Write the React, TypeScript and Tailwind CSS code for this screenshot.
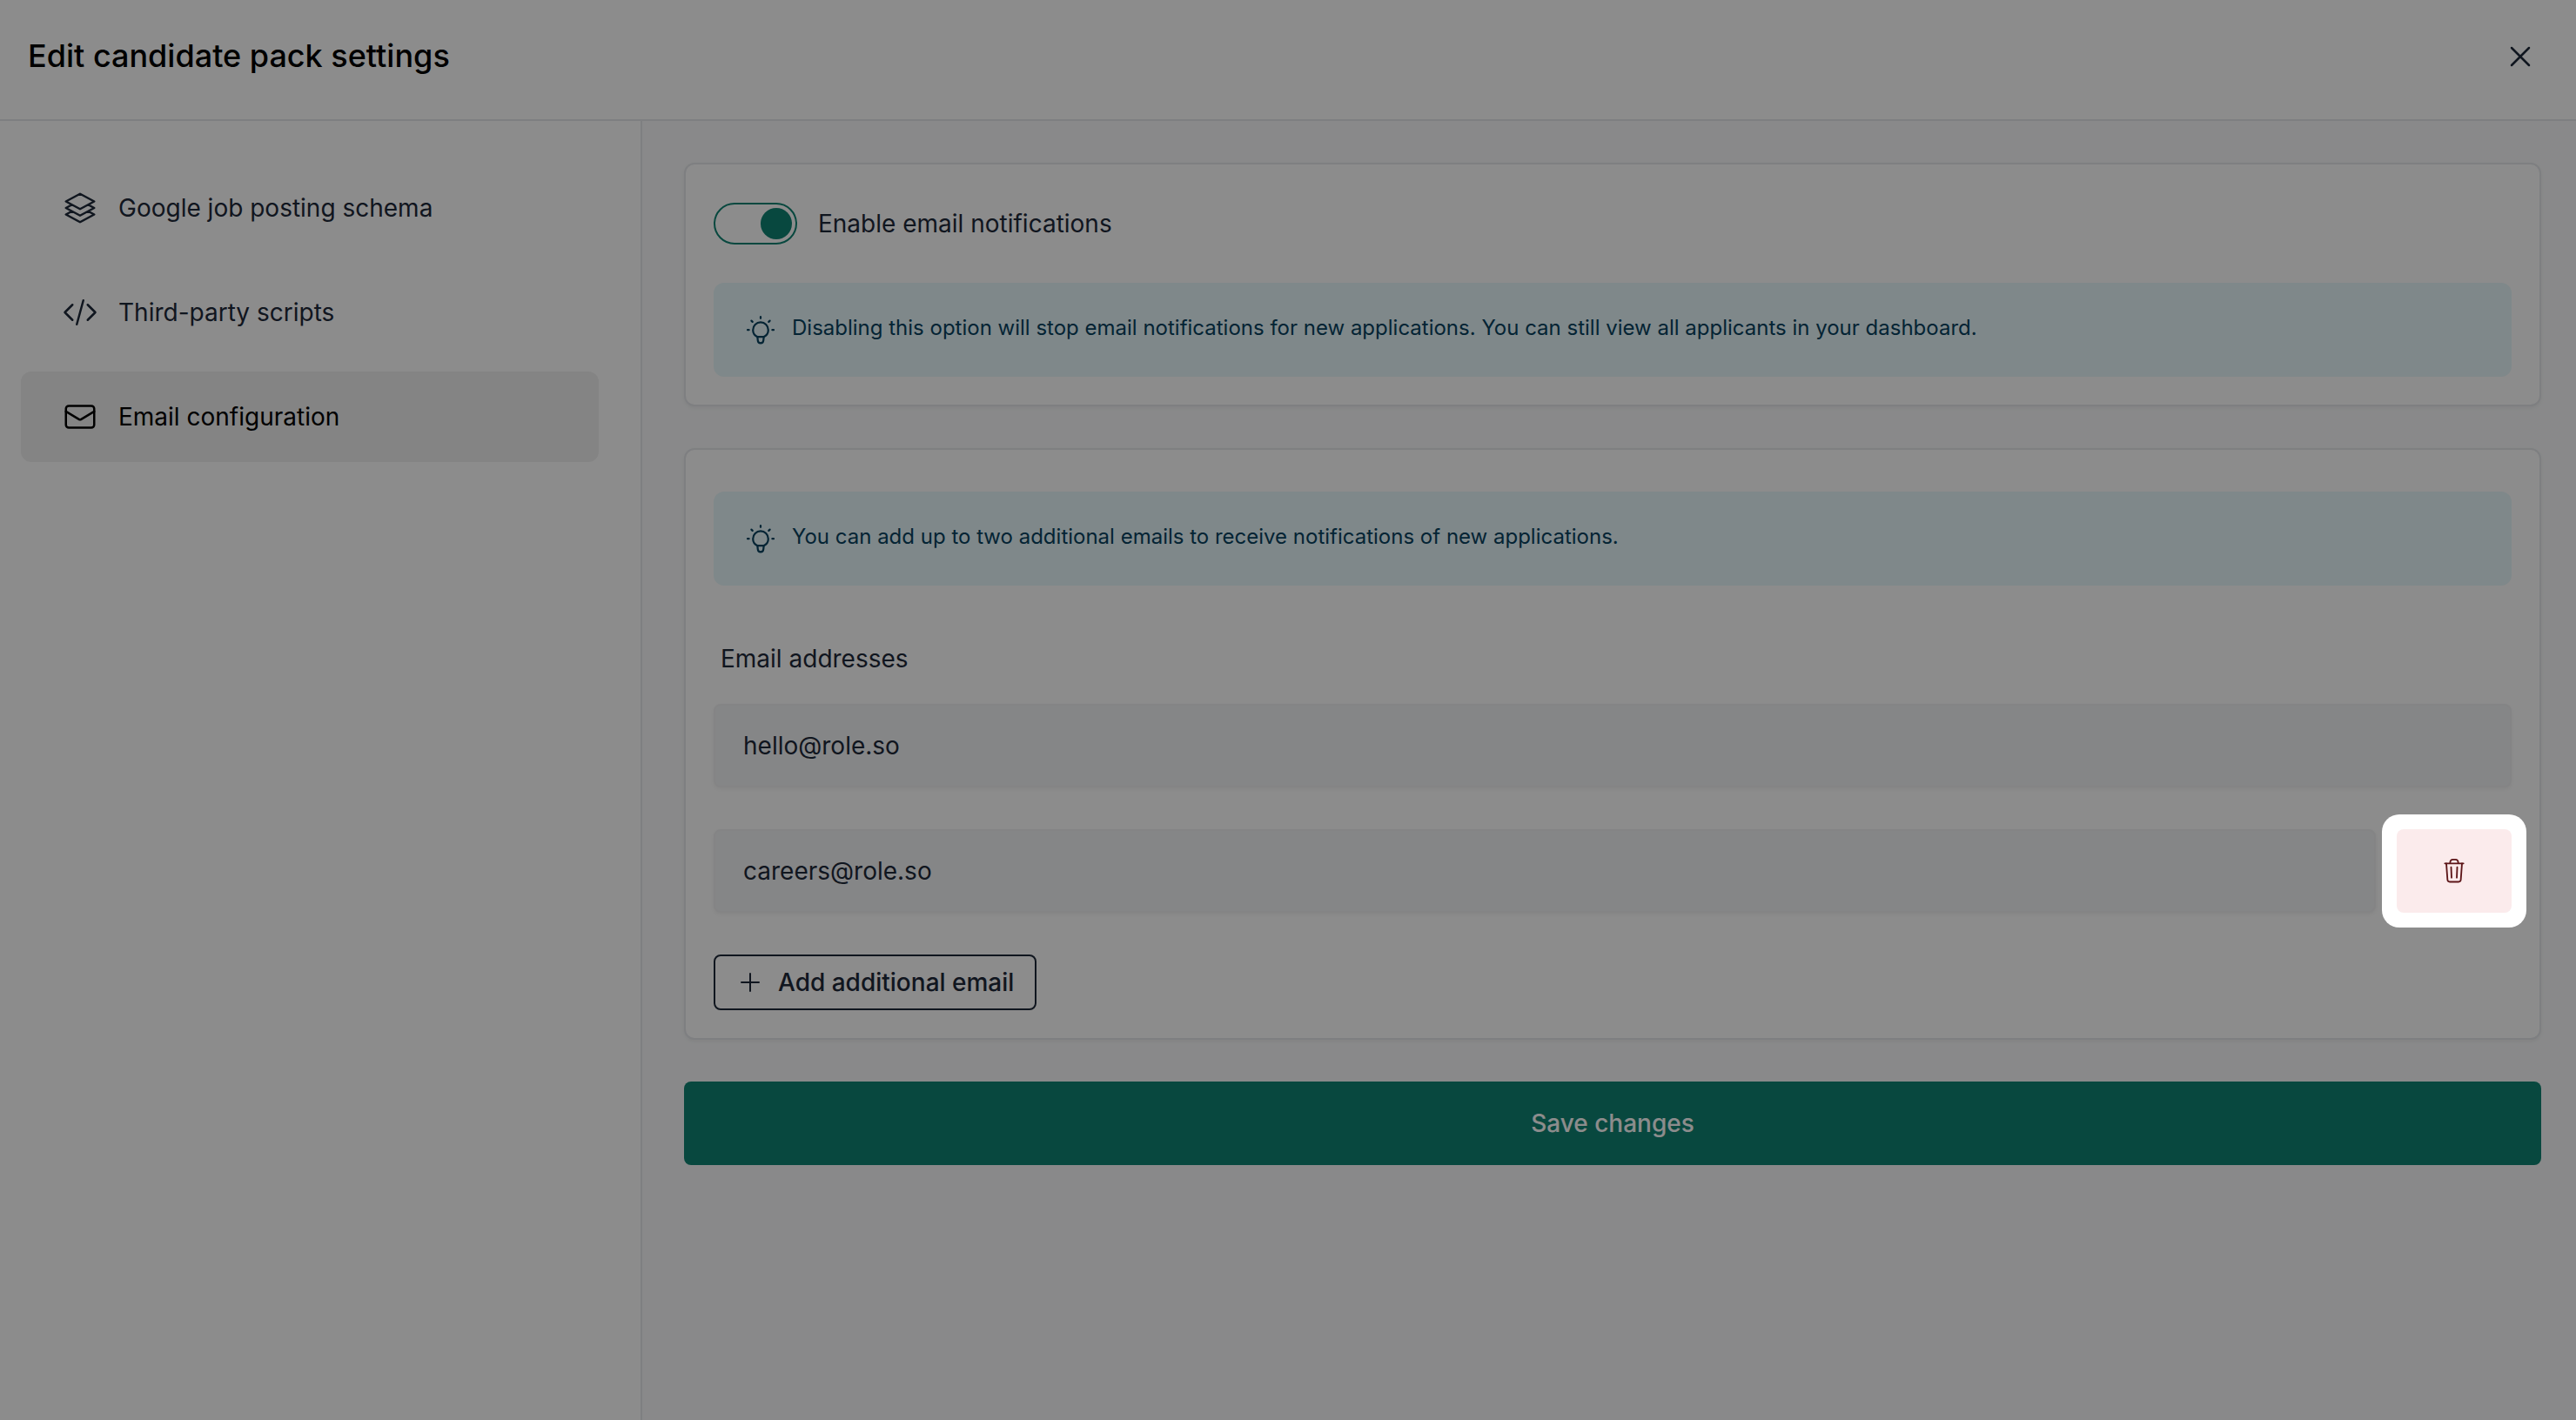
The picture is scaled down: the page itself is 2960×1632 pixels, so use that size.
import React, { useState } from 'react';

type IconProps = { className?: string };

function StrokeIcon({ className, children }: IconProps & { children: React.ReactNode }) {
  return (
    <svg
      viewBox="0 0 24 24"
      fill="none"
      stroke="currentColor"
      strokeWidth={1.5}
      strokeLinecap="round"
      strokeLinejoin="round"
      aria-hidden="true"
      className={className}
    >
      {children}
    </svg>
  );
}

const LayersIcon = ({ className }: IconProps) => (
  <StrokeIcon className={className}>
    <path d="M6.429 9.75 2.25 12l4.179 2.25m0-4.5 5.571 3 5.571-3m-11.142 0L2.25 7.5 12 2.25l9.75 5.25-4.179 2.25m0 0L21.75 12l-4.179 2.25m0 0 4.179 2.25L12 21.75 2.25 16.5l4.179-2.25m11.142 0-5.571 3-5.571-3" />
  </StrokeIcon>
);

const CodeIcon = ({ className }: IconProps) => (
  <StrokeIcon className={className}>
    <path d="M17.25 6.75 22.5 12l-5.25 5.25m-10.5 0L1.5 12l5.25-5.25m7.5-3-4.5 16.5" />
  </StrokeIcon>
);

const MailIcon = ({ className }: IconProps) => (
  <StrokeIcon className={className}>
    <rect x="2.25" y="4.5" width="19.5" height="15" rx="2" />
    <path d="M2.25 8.3 11.2 13.7Q12 14.2 12.8 13.7L21.75 8.3" />
  </StrokeIcon>
);

const CloseIcon = ({ className }: IconProps) => (
  <StrokeIcon className={className}>
    <path d="M6 18 18 6M6 6l12 12" />
  </StrokeIcon>
);

const PlusIcon = ({ className }: IconProps) => (
  <StrokeIcon className={className}>
    <path d="M12 4.5v15m7.5-7.5h-15" />
  </StrokeIcon>
);

const BulbIcon = ({ className }: IconProps) => (
  <svg
    viewBox="0 0 36 36"
    fill="none"
    stroke="currentColor"
    strokeWidth={2.2}
    strokeLinecap="round"
    strokeLinejoin="round"
    aria-hidden="true"
    className={className}
  >
    <path d="M14.7 26.2C11.5 24.9 9.2 21.8 9.2 18.2a8.8 8.8 0 0 1 17.6 0c0 3.6-2.3 6.7-5.5 8" />
    <path d="M14.3 26.2h7.4l-.5 4.200c-.2 2-1.500 3-3.200 3s-3-1-3.200-3l-.5-4.200Z" />
    <path d="M18 3v1.800M7.400 7.600l1.300 1.300M28.600 7.600l-1.300 1.300M3 18.200h1.600M31.400 18.200H33" />
  </svg>
);

const TrashIcon = ({ className }: IconProps) => (
  <svg
    viewBox="0 0 96 96"
    fill="none"
    stroke="currentColor"
    strokeWidth={5.5}
    strokeLinecap="round"
    strokeLinejoin="round"
    aria-hidden="true"
    className={className}
  >
    <path d="M16 22h64" />
    <path d="M34 21c0-8 4-12.500 10-12.500h8c6 0 10 4.500 10 12.500" />
    <path d="M21 22l4 56c.5 5 3 7.500 8 7.500h30c5 0 7.500-2.500 8-7.500l4-56" />
    <path d="M37.500 35l1.500 36M58.500 35l-1.500 36" />
  </svg>
);

const navItems = [
  { label: 'Google job posting schema', icon: LayersIcon },
  { label: 'Third-party scripts', icon: CodeIcon },
  { label: 'Email configuration', icon: MailIcon },
];

function Tip({ children }: { children: React.ReactNode }) {
  return (
    <div className="flex items-start gap-[18px] rounded-xl bg-[#e7f7fb] p-9 text-[#08425f]">
      <BulbIcon className="size-9 shrink-0" />
      <p className="text-2xl">{children}</p>
    </div>
  );
}

function Card({ children }: { children: React.ReactNode }) {
  return (
    <section className="rounded-xl border-2 border-gray-200 bg-white px-8 pb-8 shadow-[0_2px_4px_rgba(0,0,0,0.05)]">
      {children}
    </section>
  );
}

const inputClass =
  'h-24 w-full min-w-0 rounded-lg border-2 border-[#f0f1f3] bg-gray-100 px-8 shadow-[0_2px_4px_rgba(0,0,0,0.05)] outline-none';

export default function App() {
  const [enabled, setEnabled] = useState(true);
  const [active, setActive] = useState('Email configuration');
  const [emails, setEmails] = useState(['hello@role.so', 'careers@role.so']);

  const updateEmail = (index: number, value: string) =>
    setEmails(emails.map((email, i) => (i === index ? value : email)));

  return (
    <div className="flex min-h-screen flex-col overflow-hidden bg-white font-[Inter,sans-serif] text-[28px] leading-10 text-gray-800">
      <header className="flex items-center justify-between border-b-2 border-gray-200 pt-10 pr-11 pb-12 pl-8">
        <h1 className="text-4xl leading-[49px] font-medium text-black">
          Edit candidate pack settings
        </h1>
        <button type="button" aria-label="Close">
          <CloseIcon className="size-10" />
        </button>
      </header>

      <div className="flex flex-1">
        <nav className="flex w-[738px] shrink-0 flex-col gap-4 border-r-2 border-gray-200 py-12 pr-12 pl-6">
          {navItems.map(({ label, icon: Icon }) => (
            <a
              key={label}
              href="#"
              onClick={() => setActive(label)}
              className={
                active === label
                  ? 'flex items-center gap-6 rounded-xl bg-[#f0f0f0] px-12 py-8 text-black'
                  : 'flex items-center gap-6 rounded-xl px-12 py-8'
              }
            >
              <Icon className="size-10 shrink-0" />
              {label}
            </a>
          ))}
        </nav>

        <main className="flex min-w-0 flex-1 flex-col gap-12 bg-gray-50 py-12 pr-10 pl-12">
          <Card>
            <label className="flex items-center gap-6 py-11">
              <input
                type="checkbox"
                checked={enabled}
                onChange={(e) => setEnabled(e.target.checked)}
                className="flex h-12 w-24 appearance-none items-center rounded-full border-2 border-[#108473] px-1 before:size-9 before:rounded-full before:bg-[#108473] checked:justify-end"
              />
              Enable email notifications
            </label>
            <Tip>
              Disabling this option will stop email notifications for new applications. You can
              still view all applicants in your dashboard.
            </Tip>
          </Card>

          <Card>
            <div className="pt-12">
              <Tip>
                You can add up to two additional emails to receive notifications of new
                applications.
              </Tip>
            </div>

            <label htmlFor="email-0" className="mt-16 mb-8 block px-2">
              Email addresses
            </label>

            <div className="flex flex-col gap-12">
              <input
                id="email-0"
                type="email"
                value={emails[0]}
                onChange={(e) => updateEmail(0, e.target.value)}
                className={inputClass}
              />
              <div className="flex gap-6">
                <input
                  type="email"
                  aria-label="Additional email"
                  value={emails[1]}
                  onChange={(e) => updateEmail(1, e.target.value)}
                  className={inputClass}
                />
                <div className="relative">
                  <button
                    type="button"
                    aria-label="Remove email"
                    className="flex h-24 w-33 items-center justify-center rounded-lg bg-[#fbebec] text-[#5c1518]"
                  >
                    <TrashIcon className="size-8" />
                  </button>
                  {/* spotlight: dims everything except the remove button */}
                  <div className="pointer-events-none absolute -inset-[17px] z-10 rounded-[20px] shadow-[0_0_0_9999px_rgba(0,0,0,0.45)]" />
                </div>
              </div>
              <button
                type="button"
                className="flex h-16 items-center gap-4 self-start rounded-lg border-2 border-gray-800 px-6 font-medium"
              >
                <PlusIcon className="size-8" />
                Add additional email
              </button>
            </div>
          </Card>

          <button type="button" className="h-24 rounded-lg bg-[#108473] font-medium text-white">
            Save changes
          </button>
        </main>
      </div>
    </div>
  );
}
